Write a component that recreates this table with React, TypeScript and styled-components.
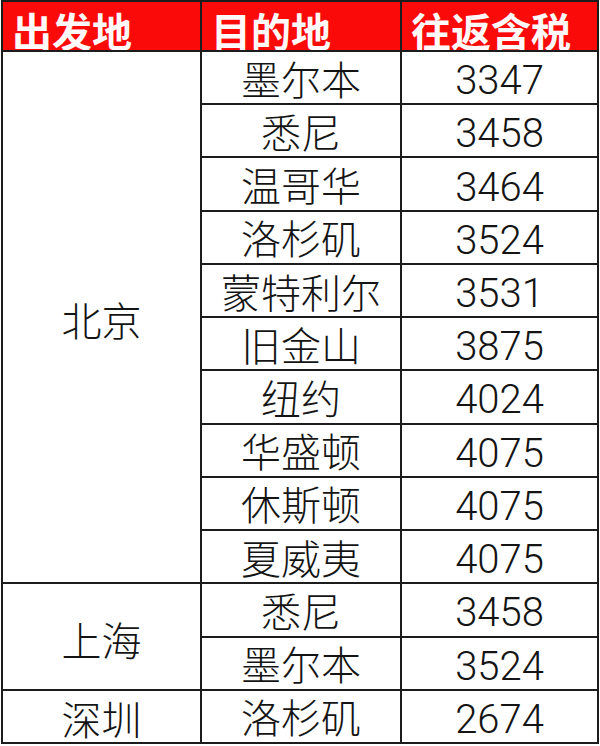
import React from 'react'
import styled, { createGlobalStyle } from 'styled-components'

type Route = { city: string; price: number }
type Group = { origin: string; routes: Route[] }

const groups: Group[] = [
  {
    origin: '北京',
    routes: [
      { city: '墨尔本', price: 3347 },
      { city: '悉尼', price: 3458 },
      { city: '温哥华', price: 3464 },
      { city: '洛杉矶', price: 3524 },
      { city: '蒙特利尔', price: 3531 },
      { city: '旧金山', price: 3875 },
      { city: '纽约', price: 4024 },
      { city: '华盛顿', price: 4075 },
      { city: '休斯顿', price: 4075 },
      { city: '夏威夷', price: 4075 },
    ],
  },
  {
    origin: '上海',
    routes: [
      { city: '悉尼', price: 3458 },
      { city: '墨尔本', price: 3524 },
    ],
  },
  {
    origin: '深圳',
    routes: [{ city: '洛杉矶', price: 2674 }],
  },
]

const headers = ['出发地', '目的地', '往返含税']

const GlobalStyle = createGlobalStyle`
  html, body {
    margin: 0;
    padding: 0;
    background: #ffffff;
  }
  body {
    font-family: "Noto Sans CJK SC", "Liberation Sans", sans-serif;
  }
`

const Sheet = styled.div`
  box-sizing: border-box;
  margin-left: 1px;
  width: 598px;
  height: 744px;
  padding: 2px;
  display: grid;
  grid-template-columns: 197px 198px 195px;
  grid-template-rows: 48px repeat(13, 1fr);
  gap: 2px;
  background: #1c1c1c;
`

const HeaderCell = styled.div`
  background: #fb0a0a;
  color: #fff8f8;
  font-family: "Noto Sans CJK SC", sans-serif;
  font-weight: 700;
  font-size: 40px;
  line-height: 40px;
  padding: 8px 0 0 9px;
  overflow: hidden;
  white-space: nowrap;
`

const Cell = styled.div`
  background: #ffffff;
  color: #141414;
  display: flex;
  align-items: center;
  justify-content: center;
  font-size: 40px;
  line-height: 1;
  white-space: nowrap;
`

const OriginCell = styled(Cell)<{ $span: number }>`
  grid-column: 1;
  grid-row: span ${({ $span }) => $span};
  font-family: "Noto Sans CJK SC", sans-serif;
  font-weight: 300;
  padding-top: 4px;
`

const CityCell = styled(Cell)`
  grid-column: 2;
  font-family: "Noto Sans CJK SC", sans-serif;
  font-weight: 300;
`

const PriceCell = styled(Cell)`
  grid-column: 3;
  font-family: Roboto, "Liberation Sans", sans-serif;
  font-weight: 300;
  padding-top: 7px;
`

export default function App() {
  return (
    <>
      <GlobalStyle />
      <Sheet>
        {headers.map((h) => (
          <HeaderCell key={h}>{h}</HeaderCell>
        ))}
        {groups.map((g) => (
          <React.Fragment key={g.origin}>
            <OriginCell $span={g.routes.length}>{g.origin}</OriginCell>
            {g.routes.map((r) => (
              <React.Fragment key={r.city}>
                <CityCell>{r.city}</CityCell>
                <PriceCell>{r.price}</PriceCell>
              </React.Fragment>
            ))}
          </React.Fragment>
        ))}
      </Sheet>
    </>
  )
}
